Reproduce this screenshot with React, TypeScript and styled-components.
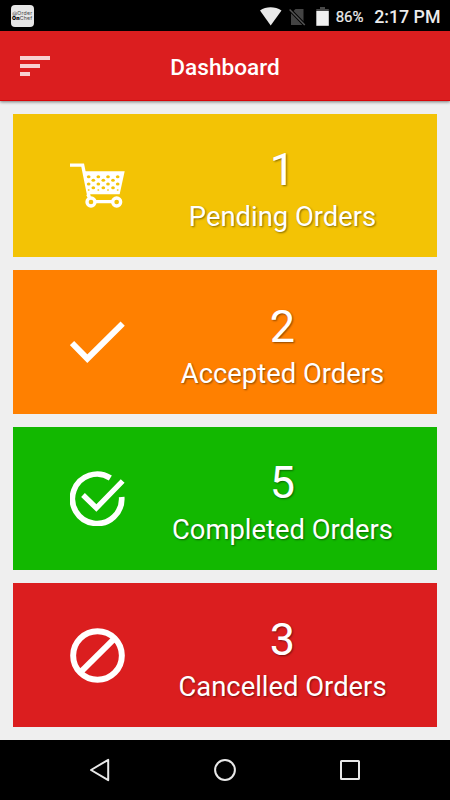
import React from 'react';
import styled, { createGlobalStyle } from 'styled-components';

const GlobalStyle = createGlobalStyle`
  html, body { margin: 0; padding: 0; background: #000; }
  body { font-family: Roboto, "Liberation Sans", sans-serif; }
  svg { display: block; flex: none; }
`;

const Screen = styled.div`
  display: flex;
  flex-direction: column;
  width: 450px;
  height: 800px;
  overflow: hidden;
  background: #efefef;
`;

const StatusBar = styled.div`
  display: flex;
  align-items: center;
  justify-content: space-between;
  box-sizing: border-box;
  height: 31px;
  padding: 0 9.5px 0 11px;
  background: #000;
  color: #ececec;
`;

const AppBadge = styled.div`
  display: flex;
  flex-direction: column;
  justify-content: center;
  width: 22.5px;
  height: 22px;
  border-radius: 4px;
  background: #e6e6e6;
  color: #444;
  font-family: Inter, Roboto, sans-serif;
  font-size: 5.2px;
  letter-spacing: 0.2px;
  line-height: 5px;
  text-align: center;
  white-space: nowrap;

  b { color: #000; font-weight: 900; }
`;

const StatusIcons = styled.div`
  display: flex;
  align-items: center;
`;

const BatteryText = styled.span`
  width: 38.5px;
  padding-top: 3px;
  font-size: 15px;
  line-height: 18px;
  -webkit-text-stroke: 0.2px #ececec;
`;

const Clock = styled.span`
  padding-top: 3px;
  font-size: 17.8px;
  font-weight: 500;
  line-height: 22px;
  white-space: nowrap;
`;

const Header = styled.header`
  display: grid;
  grid-template-columns: 60px 1fr 60px;
  align-items: center;
  box-sizing: border-box;
  height: 70px;
  border-bottom: 1px solid #d80508;
  background: #db1e1f;
  box-shadow: 0 1px 3px rgba(0, 0, 0, 0.5);
`;

const MenuButton = styled.button`
  display: flex;
  flex-direction: column;
  gap: 4.4px;
  padding: 1px 0 0 20px;
  border: 0;
  background: none;
`;

const MenuLine = styled.span<{ $width: number }>`
  width: ${(p) => p.$width}px;
  height: 4px;
  background: #f8d0d0;
`;

const Title = styled.h1`
  margin: 0;
  padding-top: 4px;
  color: #fff;
  font-size: 22.6px;
  font-weight: 500;
  line-height: 26px;
  text-align: center;
`;

const CardList = styled.main`
  display: flex;
  flex: 1;
  flex-direction: column;
  gap: 13px;
  box-sizing: border-box;
  padding: 12.9px 13px 13px 12.5px;
`;

const Card = styled.section<{ $color: string }>`
  display: flex;
  flex: 1;
  align-items: center;
  padding-left: 57.5px;
  background: ${(p) => p.$color};
`;

const CardText = styled.div`
  display: flex;
  flex: 1;
  flex-direction: column;
  align-items: center;
  gap: 5px;
  padding: 6px 0 0 3px;
  color: #fff;
  text-shadow: 1px 1px 2px rgba(0, 0, 0, 0.45);
`;

const Count = styled.span`
  font-size: 45px;
  line-height: 53px;
`;

const Label = styled.span`
  font-size: 27.4px;
  line-height: 33px;
  white-space: nowrap;
`;

const NavBar = styled.nav`
  display: flex;
  align-items: center;
  justify-content: space-between;
  box-sizing: border-box;
  height: 60px;
  padding: 0 89px 0 87px;
  background: #000;
`;

const holes = [94, 105, 116, 127, 134].flatMap((y, row) =>
  (row % 2 ? [130, 160, 189] : [116, 145, 174, 203]).map((x) => ({ x, y }))
);

const CartIcon = () => (
  <svg width="55" height="46" viewBox="60 53 165 138">
    <path d="M60 59.5H98L117 154" fill="none" stroke="#fff" strokeWidth="10" />
    <path d="M99 78H224L209 147H113Z" fill="#fff" />
    {holes.map(({ x, y }) => (
      <ellipse key={`${x}-${y}`} cx={x} cy={y} rx={y === 134 ? 3 : 5.5} ry={y === 134 ? 2 : 4.5} fill="#f3c305" />
    ))}
    <path d="M113 147L120 160M132 169H191" stroke="#fff" strokeWidth="10" />
    <circle cx="123" cy="170" r="12" fill="none" stroke="#fff" strokeWidth="10" />
    <circle cx="200" cy="170" r="12" fill="none" stroke="#fff" strokeWidth="10" />
  </svg>
);

const CheckIcon = () => (
  <svg width="55" height="42" viewBox="60 63 165 126">
    <path d="M66 129L112 176L218 71" fill="none" stroke="#fff" strokeWidth="18" />
  </svg>
);

const CompletedIcon = () => (
  <svg width="55" height="55" viewBox="60 48 165 165">
    <path d="M181 69A74 74 0 1 0 215 126" fill="none" stroke="#fff" strokeWidth="17" />
    <path d="M99 120L139 159L218 78" fill="none" stroke="#fff" strokeWidth="16" />
  </svg>
);

const CancelledIcon = () => (
  <svg width="55" height="55" viewBox="59 38 166 166">
    <circle cx="142" cy="121" r="73.5" fill="none" stroke="#fff" strokeWidth="18" />
    <path d="M91 171L193 70" stroke="#fff" strokeWidth="18" />
  </svg>
);

const cards = [
  { count: 1, label: 'Pending Orders', color: '#f3c305', Icon: CartIcon },
  { count: 2, label: 'Accepted Orders', color: '#ff8000', Icon: CheckIcon },
  { count: 5, label: 'Completed Orders', color: '#12b800', Icon: CompletedIcon },
  { count: 3, label: 'Cancelled Orders', color: '#db1e1f', Icon: CancelledIcon },
];

export default function App() {
  return (
    <Screen>
      <GlobalStyle />
      <StatusBar>
        <AppBadge>
          <span>@Order</span>
          <span><b>On</b>Chef</span>
        </AppBadge>
        <StatusIcons>
          <svg width="76" height="30" viewBox="260 0 76 30">
            <path d="M260 9.5C266 5.3 275 5.3 281.5 9.5L270.7 24.5Z" fill="#e9e9e9" />
            <path d="M295.5 8H303.5V24H291V12.5Z" fill="#444" />
            <path d="M289.6 8.4L305 24.2" stroke="#000" strokeWidth="3.4" />
            <path d="M289.6 8.4L304.8 24" stroke="#555" strokeWidth="1.5" />
            <path d="M316.3 8H320V6H325V8H328.8V10H316.3Z" fill="#484848" />
            <path d="M316.3 10H328.8V24.8H316.3Z" fill="#f0f0f0" />
          </svg>
          <BatteryText>86%</BatteryText>
          <Clock>2:17 PM</Clock>
        </StatusIcons>
      </StatusBar>
      <Header>
        <MenuButton aria-label="Menu">
          <MenuLine $width={30} />
          <MenuLine $width={20} />
          <MenuLine $width={10} />
        </MenuButton>
        <Title>Dashboard</Title>
      </Header>
      <CardList>
        {cards.map(({ count, label, color, Icon }) => (
          <Card key={label} $color={color}>
            <Icon />
            <CardText>
              <Count>{count}</Count>
              <Label>{label}</Label>
            </CardText>
          </Card>
        ))}
      </CardList>
      <NavBar>
        <svg width="24" height="26" viewBox="0 0 24 26">
          <path d="M4 13L21.2 2.8V23.2Z" fill="none" stroke="#e8e8e8" strokeWidth="2" strokeLinejoin="round" />
        </svg>
        <svg width="24" height="24" viewBox="0 0 24 24">
          <circle cx="12" cy="12" r="9.9" fill="none" stroke="#e8e8e8" strokeWidth="2" />
        </svg>
        <svg width="22" height="22" viewBox="0 0 22 22">
          <rect x="2" y="2" width="18" height="18" rx="0.5" fill="none" stroke="#e8e8e8" strokeWidth="2" />
        </svg>
      </NavBar>
    </Screen>
  );
}
